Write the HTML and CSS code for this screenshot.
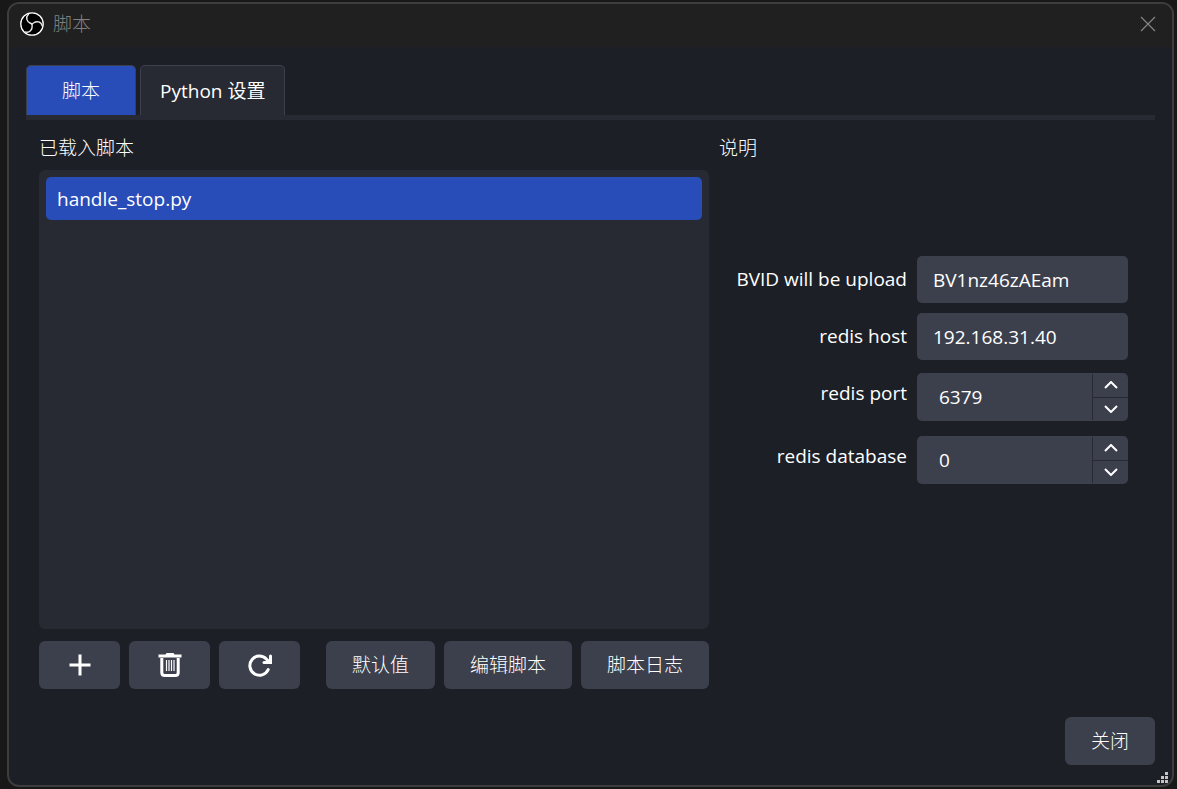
FILE: index.html
```html
<!DOCTYPE html>
<html lang="zh-CN">
<head>
    <meta charset="UTF-8">
    <meta name="viewport" content="width=device-width, initial-scale=1.0">
    <title>脚本</title>
    <link rel="stylesheet" href="styles.css">
</head>
<body>
    <div class="window">
        <header class="titlebar">
            <svg class="logo" viewBox="0 0 24 24">
                <circle cx="12" cy="12" r="11.2" fill="#000" stroke="#fff" stroke-width="1.3"/>
                <g fill="none" stroke="#e8e8e8" stroke-width="1.4" stroke-linecap="round">
                    <path id="arm" d="M12 12L10 11C7 9.6 5.2 5.5 8.5 2.2"/>
                    <use href="#arm" transform="rotate(120 12 12)"/>
                    <use href="#arm" transform="rotate(240 12 12)"/>
                </g>
            </svg>
            <h1>脚本</h1>
            <button class="close-x" aria-label="关闭窗口">
                <svg viewBox="0 0 16 16"><path d="M1 1L15 15M15 1L1 15"/></svg>
            </button>
        </header>

        <main>
            <nav class="tabs">
                <button class="tab active">脚本</button>
                <button class="tab">Python 设置</button>
            </nav>

            <div class="page">
                <section class="scripts">
                    <h2>已载入脚本</h2>
                    <ul class="list">
                        <li class="selected">handle_stop.py</li>
                    </ul>
                    <div class="toolbar">
                        <button class="btn icon" aria-label="添加">
                            <svg viewBox="0 0 24 24"><path d="M12 1.5V22.5M1.5 12H22.5" stroke="#fff" stroke-width="3"/></svg>
                        </button>
                        <button class="btn icon" aria-label="删除">
                            <svg viewBox="0 0 24 24">
                                <path d="M.5 1.5H7.5L8.5 0H15.5L16.5 1.5H23.5V4.5H.5Z" fill="#fff"/>
                                <path d="M3.8 5V19.5Q3.8 22.5 6.8 22.5H17.2Q20.2 22.5 20.2 19.5V5" fill="none" stroke="#fff" stroke-width="3"/>
                                <path d="M8.5 7V18M11 7V18M13.5 7V18M16 7V18" stroke="#fff" stroke-width="1.2"/>
                            </svg>
                        </button>
                        <button class="btn icon" aria-label="重新载入">
                            <svg viewBox="0 0 24 24">
                                <path d="M20.2 16.6A9.6 9.6 0 1 1 18.6 6.2L21 8.6" fill="none" stroke="#fff" stroke-width="3" stroke-linecap="round"/>
                                <path d="M22.5 3V9.6H16" fill="none" stroke="#fff" stroke-width="3" stroke-linecap="round"/>
                            </svg>
                        </button>
                        <span class="spacer"></span>
                        <button class="btn">默认值</button>
                        <button class="btn">编辑脚本</button>
                        <button class="btn">脚本日志</button>
                    </div>
                </section>

                <section class="details">
                    <h2>说明</h2>
                    <form class="props">
                        <label for="bvid">BVID will be upload</label>
                        <input id="bvid" class="field" type="text" value="BV1nz46zAEam">

                        <label for="host">redis host</label>
                        <input id="host" class="field" type="text" value="192.168.31.40">

                        <label for="port">redis port</label>
                        <div class="spin">
                            <input id="port" type="number" value="6379">
                            <div class="arrows">
                                <button type="button" data-step="1" aria-label="增加"><svg viewBox="0 0 14 8"><path d="M1 7L7 1L13 7"/></svg></button>
                                <button type="button" data-step="-1" aria-label="减少"><svg viewBox="0 0 14 8"><path d="M1 1L7 7L13 1"/></svg></button>
                            </div>
                        </div>

                        <label for="database">redis database</label>
                        <div class="spin">
                            <input id="database" type="number" value="0">
                            <div class="arrows">
                                <button type="button" data-step="1" aria-label="增加"><svg viewBox="0 0 14 8"><path d="M1 7L7 1L13 7"/></svg></button>
                                <button type="button" data-step="-1" aria-label="减少"><svg viewBox="0 0 14 8"><path d="M1 1L7 7L13 1"/></svg></button>
                            </div>
                        </div>
                    </form>
                </section>
            </div>

            <footer>
                <button class="btn">关闭</button>
            </footer>
        </main>

        <svg class="grip" viewBox="0 0 11 11" fill="#c4c4c4">
            <path d="M8 0h3v3h-3zM4 4h3v3h-3zM8 4h3v3h-3zM0 8h3v3h-3zM4 8h3v3h-3zM8 8h3v3h-3z"/>
        </svg>
    </div>

    <script>
        // 数值框的上下按钮
        document.querySelectorAll('.arrows button').forEach(function (button) {
            button.addEventListener('click', function () {
                const input = button.closest('.spin').querySelector('input');
                input.value = Number(input.value) + Number(button.dataset.step);
            });
        });
    </script>
</body>
</html>
```

FILE: styles.css
```css
* {
    box-sizing: border-box;
}
body {
    margin: 0;
    padding: 2px 3px 2px 7px;
    min-height: 100vh;
    display: flex;
    background-color: #181818;
    color: #fff;
    font-family: "Open Sans", "Noto Sans CJK SC", sans-serif;
    font-size: 19px;
    line-height: 24px;
}
button, input {
    font: inherit;
    color: inherit;
    border: none;
    margin: 0;
    padding: 0;
}
h1, h2 {
    margin: 0;
    font-size: 19px;
    font-weight: 300;
}
svg {
    display: block;
}
.window {
    position: relative;
    flex: 1;
    min-width: 0;
    display: flex;
    flex-direction: column;
    border: 2px solid #3d3d3d;
    border-radius: 12px;
    background-color: #1d1f26;
    overflow: hidden;
}
.titlebar {
    display: flex;
    align-items: center;
    gap: 9px;
    height: 43px;
    padding: 0 16px 3px 11px;
    background-color: #202020;
}
.titlebar h1 {
    flex: 1;
    color: #808080;
}
.logo {
    width: 24px;
    height: 24px;
}
.close-x {
    background: none;
}
.close-x svg {
    width: 16px;
    height: 16px;
    fill: none;
    stroke: #858585;
    stroke-width: 1.2;
}
main {
    flex: 1;
    display: flex;
    flex-direction: column;
    padding: 18px 17px 20px;
}
.tabs {
    display: flex;
    gap: 4px;
    border-bottom: 5px solid #272a33;
}
.tab {
    height: 50px;
    padding: 0 19px;
    border: 1px solid #3c404d;
    border-bottom: none;
    border-radius: 5px 5px 0 0;
    background-color: #272a33;
}
.tab.active {
    padding: 0 35px;
    background-color: #284cb8;
    font-weight: 300;
}
.page {
    flex: 1;
    display: grid;
    grid-template-columns: minmax(0, 1fr) 436px;
    gap: 10px;
    padding: 16px 0 0 13px;
}
.scripts {
    display: flex;
    flex-direction: column;
}
.list {
    flex: 1;
    margin: 10px 0 12px;
    padding: 7px;
    list-style: none;
    border-radius: 6px;
    background-color: #272a33;
}
.list li {
    padding: 10px 11px 9px;
    border-radius: 5px;
}
.list .selected {
    background-color: #284cb8;
}
.toolbar {
    display: flex;
    gap: 9px;
}
.spacer {
    flex: 1;
}
.btn {
    height: 48px;
    padding: 0 26px;
    border-radius: 6px;
    background-color: #3c404d;
    font-weight: 300;
}
.btn.icon {
    width: 81px;
    padding: 0 29px;
}
.btn.icon svg {
    width: 24px;
    height: 24px;
}
.props {
    display: grid;
    grid-template-columns: 1fr 211px;
    gap: 10px;
    align-items: start;
    margin: 96px 27px 0 0;
}
.props label {
    text-align: right;
    line-height: 46px;
}
.field {
    width: 100%;
    height: 47px;
    padding: 0 16px;
    border-radius: 5px;
    background-color: #3c404d;
}
.spin {
    display: flex;
    height: 48px;
    margin: 3px 0 2px;
    border-radius: 5px;
    background-color: #3c404d;
}
.spin input {
    flex: 1;
    min-width: 0;
    padding: 0 22px;
    background: none;
    appearance: textfield;
}
.spin input::-webkit-inner-spin-button {
    display: none;
}
.arrows {
    display: flex;
    flex-direction: column;
    width: 36px;
    margin: 1px 0;
    border-left: 1px solid #272a33;
}
.arrows button {
    flex: 1;
    display: flex;
    align-items: center;
    justify-content: center;
    background: none;
}
.arrows button + button {
    border-top: 1px solid #272a33;
}
.arrows svg {
    width: 14px;
    height: 8px;
    fill: none;
    stroke: #fff;
    stroke-width: 2;
}
footer {
    display: flex;
    justify-content: flex-end;
    margin-top: 28px;
}
/* 右下角的缩放手柄 */
.grip {
    position: absolute;
    right: 4px;
    bottom: 2px;
    width: 11px;
    height: 11px;
}
```
